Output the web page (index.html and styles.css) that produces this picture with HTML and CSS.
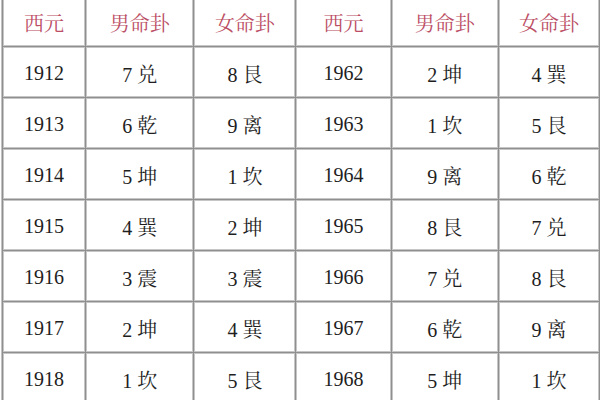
FILE: index.html
```html
<!DOCTYPE html>
<html lang="zh">
<head>
<meta charset="utf-8">
<link rel="stylesheet" href="styles.css">
</head>
<body>
<table class="gua">
  <colgroup>
    <col class="c1"><col class="c2"><col class="c3"><col class="c4"><col class="c5"><col class="c6">
  </colgroup>
  <thead>
    <tr><th>西元</th><th>男命卦</th><th>女命卦</th><th>西元</th><th>男命卦</th><th>女命卦</th></tr>
  </thead>
  <tbody>
    <tr><td>1912</td><td>7 兑</td><td>8 艮</td><td>1962</td><td>2 坤</td><td>4 巽</td></tr>
    <tr><td>1913</td><td>6 乾</td><td>9 离</td><td>1963</td><td>1 坎</td><td>5 艮</td></tr>
    <tr><td>1914</td><td>5 坤</td><td>1 坎</td><td>1964</td><td>9 离</td><td>6 乾</td></tr>
    <tr><td>1915</td><td>4 巽</td><td>2 坤</td><td>1965</td><td>8 艮</td><td>7 兑</td></tr>
    <tr><td>1916</td><td>3 震</td><td>3 震</td><td>1966</td><td>7 兑</td><td>8 艮</td></tr>
    <tr><td>1917</td><td>2 坤</td><td>4 巽</td><td>1967</td><td>6 乾</td><td>9 离</td></tr>
    <tr><td>1918</td><td>1 坎</td><td>5 艮</td><td>1968</td><td>5 坤</td><td>1 坎</td></tr>
  </tbody>
</table>
</body>
</html>
```
FILE: styles.css
```css
html, body {
  margin: 0;
  padding: 0;
  background: #fff;
  overflow: hidden;
}
.gua {
  margin: -6px 0 0 1px;
  border: 1px solid #c2c2c2;
  border-collapse: separate;
  border-spacing: 1px;
  background: #8f8f8f;
  table-layout: fixed;
  width: 600px;
  font-family: "Liberation Serif", "Noto Serif CJK SC", "Noto Sans CJK SC", serif;
  font-size: 20px;
  color: #1e1e1e;
}
.gua th, .gua td {
  border: 1px solid #c6c6c6;
  background: #fff;
  padding: 0;
  text-align: center;
  vertical-align: middle;
  font-weight: normal;
}
.gua th {
  color: #bb4d64;
  padding-top: 2px;
  height: 46px;
}
.gua td {
  padding-top: 3px;
  height: 45px;
}
.c1 { width: 82px; }
.c2 { width: 107px; }
.c3 { width: 101px; }
.c4 { width: 94px; }
.c5 { width: 106px; }
.c6 { width: 100px; }
```
